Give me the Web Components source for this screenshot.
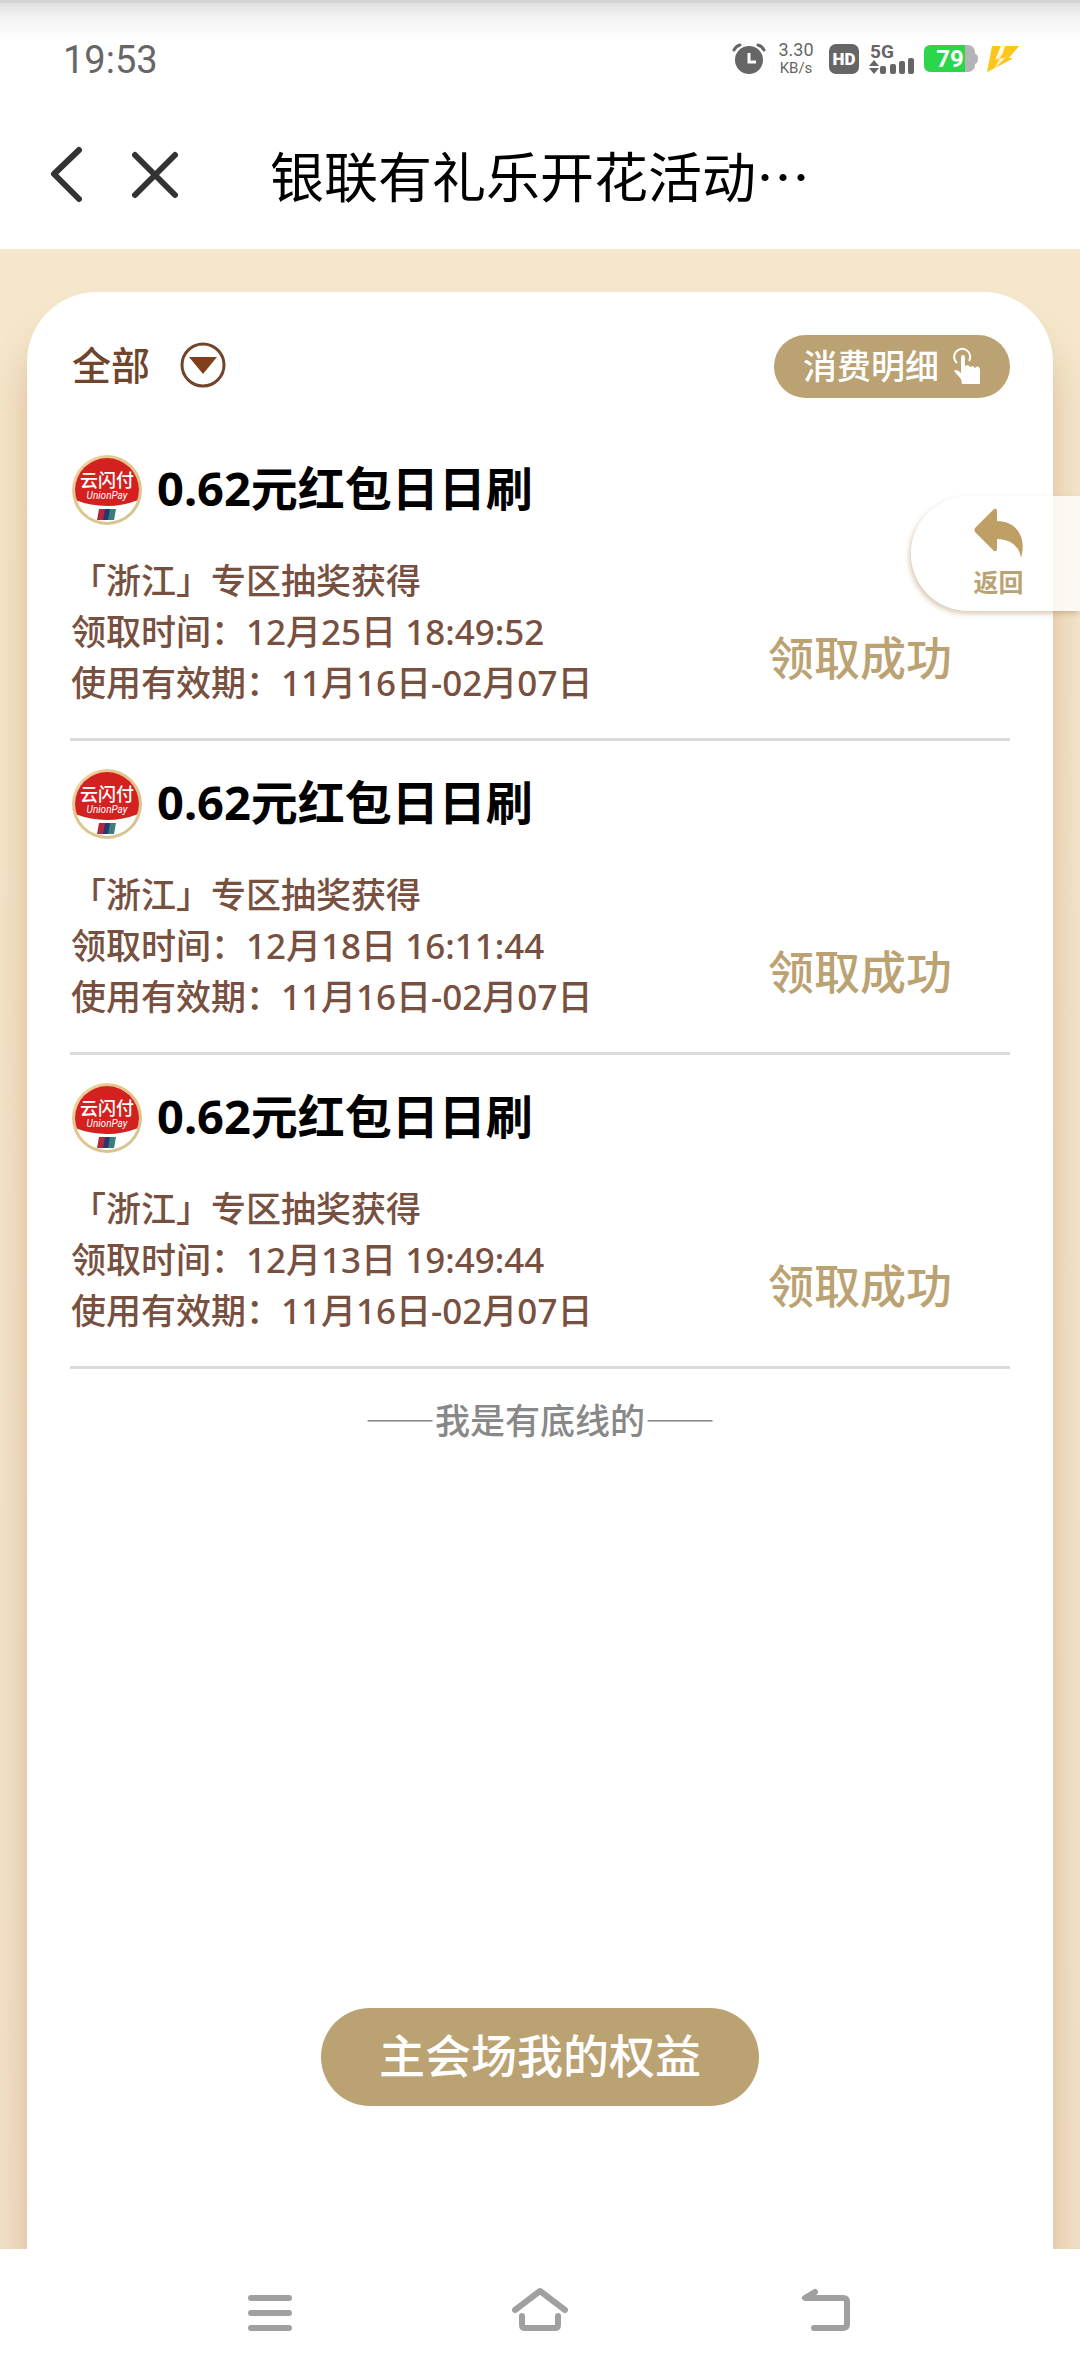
<!DOCTYPE html>
<html lang="zh-CN">
<head>
<meta charset="UTF-8">
<meta name="viewport" content="width=device-width, initial-scale=1">
<title>银联有礼乐开花活动</title>
<style>
  :root {
    --gold: #bba272;
    --brown: #78503f;
    --line: #dbdbdb;
    --grey: #666666;
  }
  html, body {
    margin: 0;
    height: 100%;
  }
  body {
    font-family: "Noto Sans", "Noto Sans CJK SC", sans-serif;
    background: #ffffff;
  }
</style>
</head>
<body>
<coupon-app></coupon-app>

<script>
class StatusBar extends HTMLElement {
  constructor() {
    super();
    this.attachShadow({ mode: "open" });
  }

  connectedCallback() {
    this.shadowRoot.innerHTML = `
      <style>
        :host {
          display: flex;
          align-items: center;
          justify-content: space-between;
          height: 104px;
          padding: 14px 60px 0 63px;
          box-sizing: border-box;
          color: var(--grey);
          font-family: Roboto, "Noto Sans", sans-serif;
          background: linear-gradient(#d4d4d4 0, #d4d4d4 2px, #e2e2e2 4px, #f3f3f3 18px, #ffffff 40px);
        }
        .time {
          font-size: 38px;
          line-height: 44px;
          padding-top: 2px;
        }
        .icons {
          display: flex;
          align-items: center;
        }
        svg { display: block; }
        .speed {
          display: flex;
          flex-direction: column;
          align-items: center;
          width: 40px;
          margin: 0 12px 0 10px;
          font-size: 18px;
          line-height: 18px;
        }
        .speed .unit { font-size: 15px; }
        .hd { margin-right: 9px; }
        .signal { margin-right: 9px; }
        .battery { margin-right: 8px; }
      </style>
      <div class="time">19:53</div>
      <div class="icons">
        <svg width="34" height="32" viewBox="0 0 34 32">
          <circle cx="17" cy="17" r="14" fill="#666"/>
          <path d="M2 7Q4 3 8 2M32 7Q30 3 26 2" fill="none" stroke="#666" stroke-width="3" stroke-linecap="round"/>
          <path d="M17 10V19H24" fill="none" stroke="#fff" stroke-width="3"/>
        </svg>
        <div class="speed"><span>3.30</span><span class="unit">KB/s</span></div>
        <svg class="hd" width="32" height="32" viewBox="0 0 32 32">
          <rect x="1" y="1" width="30" height="30" rx="7" fill="#666"/>
          <text x="16" y="22" text-anchor="middle" font-size="17" font-weight="900" fill="#fff">HD</text>
        </svg>
        <svg class="signal" width="46" height="40" viewBox="0 -4 46 40">
          <text x="1" y="15" font-size="19" font-weight="700" fill="#666">5G</text>
          <path d="M5 17L10 23H0ZM0 25H10L5 31Z" fill="#666"/>
          <rect x="11" y="23" width="6" height="8" rx="2" fill="#666"/>
          <rect x="21" y="21" width="6" height="10" rx="2" fill="#666"/>
          <rect x="30" y="18" width="6" height="13" rx="2" fill="#666"/>
          <rect x="39" y="15" width="6" height="16" rx="2" fill="#666"/>
        </svg>
        <svg class="battery" width="54" height="28" viewBox="0 0 54 28">
          <rect width="51" height="27" rx="7" fill="#b4b4b8"/>
          <path d="M50 8Q54 9 54 14T50 19Z" fill="#b4b4b8"/>
          <path d="M7 0H41V27H7Q0 27 0 20V7Q0 0 7 0Z" fill="#2bd64a"/>
          <text x="26" y="22" text-anchor="middle" font-size="24" font-weight="700" fill="#fff">79</text>
        </svg>
        <svg width="34" height="28" viewBox="0 0 34 28">
          <path d="M6 1H15L10 13L17 9L33 1L22 14H26L1 27Z" fill="#fdc61c"/>
          <path d="M19 1H33L22 13H27L1 27L8 18L14 17Z" fill="#fdc61c"/>
          <path d="M18 1L9 15L14 13L8 24L20 12L14 14Z" fill="#fff6d8"/>
        </svg>
      </div>
    `;
  }
}

class NavHeader extends HTMLElement {
  constructor() {
    super();
    this.attachShadow({ mode: "open" });
  }

  connectedCallback() {
    this.shadowRoot.innerHTML = `
      <style>
        :host {
          display: flex;
          align-items: center;
          height: 145px;
          padding: 0 48px 4px;
          box-sizing: border-box;
          background: #ffffff;
        }
        button {
          display: block;
          padding: 0;
          border: 0;
          background: none;
        }
        svg { display: block; }
        .close { margin-left: 44px; }
        h1 {
          margin: 0 0 0 92px;
          font-size: 54px;
          line-height: 64px;
          font-weight: 400;
          font-family: "Noto Sans CJK SC", sans-serif;
          color: #000000;
        }
      </style>
      <button class="back" aria-label="返回上一页">
        <svg width="40" height="60" viewBox="0 0 40 60"><path d="M31 5L6 29L31 54" fill="none" stroke="#333" stroke-width="6" stroke-linecap="round" stroke-linejoin="round"/></svg>
      </button>
      <button class="close" aria-label="关闭">
        <svg width="46" height="60" viewBox="0 0 46 60"><path d="M3 10L43 50M43 10L3 50" fill="none" stroke="#333" stroke-width="6" stroke-linecap="round"/></svg>
      </button>
      <h1><slot></slot></h1>
    `;
  }
}

class FilterBar extends HTMLElement {
  constructor() {
    super();
    this.attachShadow({ mode: "open" });
  }

  connectedCallback() {
    this.shadowRoot.innerHTML = `
      <style>
        :host {
          display: flex;
          align-items: center;
          justify-content: space-between;
        }
        button {
          display: flex;
          align-items: center;
          border: 0;
          font-family: inherit;
          font-weight: 500;
        }
        svg { display: block; }
        .filter {
          gap: 30px;
          padding: 0 0 4px 2px;
          background: none;
          color: #70452c;
          font-size: 39px;
          line-height: 48px;
        }
        .detail {
          gap: 14px;
          height: 63px;
          padding: 0 27px 2px 29px;
          border-radius: 32px;
          background: var(--gold);
          color: #ffffff;
          font-size: 34px;
          line-height: 40px;
        }
      </style>
      <button class="filter">
        <span>全部</span>
        <svg width="46" height="46" viewBox="0 0 46 46">
          <circle cx="23" cy="23" r="21" fill="none" stroke="#70452c" stroke-width="3"/>
          <path d="M9 15H37L23 32Z" fill="#80401a"/>
        </svg>
      </button>
      <button class="detail">
        <span>消费明细</span>
        <svg width="30" height="38" viewBox="0 0 30 38">
          <path d="M4 16A8 8 0 1 1 16 14" fill="none" stroke="#fff" stroke-width="2"/>
          <path d="M8 11Q8 8 10 8T12 11V19L15 18L17 20L20 19L22 21L25 19L27 22V37H9L8 32L1 24Q3 21 8 26Z" fill="#fff"/>
        </svg>
      </button>
    `;
  }
}

class CouponItem extends HTMLElement {
  constructor() {
    super();
    this.attachShadow({ mode: "open" });
  }

  connectedCallback() {
    this.shadowRoot.innerHTML = `
      <style>
        :host {
          display: block;
          padding: 27px 0 30px;
          border-bottom: 3px solid var(--line);
        }
        .head {
          display: flex;
          align-items: center;
          gap: 14px;
          height: 72px;
        }
        h2 {
          margin: 0;
          padding-bottom: 4px;
          font-size: 47px;
          line-height: 56px;
          font-weight: 700;
          color: #000000;
        }
        .body {
          display: flex;
          align-items: flex-end;
          justify-content: space-between;
          padding: 29px 58px 0 1px;
        }
        .info {
          color: var(--brown);
          font-size: 35px;
          line-height: 51px;
          font-weight: 500;
        }
        .state {
          padding-bottom: 23px;
          color: var(--gold);
          font-size: 46px;
          line-height: 56px;
          font-weight: 500;
        }
      </style>
      <div class="head">
        <svg width="73" height="72" viewBox="0 0 73 72">
          <defs>
            <linearGradient id="rim" x1="0" y1="0" x2="1" y2="1">
              <stop offset="0" stop-color="#f2dfb4"/>
              <stop offset="0.3" stop-color="#e6c687"/>
              <stop offset="1" stop-color="#d3c394"/>
            </linearGradient>
            <clipPath id="face"><circle cx="37" cy="36" r="32"/></clipPath>
          </defs>
          <circle cx="37" cy="36" r="35" fill="url(#rim)"/>
          <circle cx="37" cy="36" r="32" fill="#fff"/>
          <path d="M0 0H73V44Q37 60 0 44Z" fill="#d3211f" clip-path="url(#face)"/>
          <text x="37" y="33" text-anchor="middle" font-size="18" font-weight="500" fill="#fff">云闪付</text>
          <text x="37" y="45" text-anchor="middle" font-size="10" font-style="italic" font-family="Roboto, sans-serif" fill="#fff">UnionPay</text>
          <path d="M29 55H36L34 66H27Z" fill="#b7253c"/>
          <path d="M35 55H41L39 66H33Z" fill="#27376f"/>
          <path d="M40 55H46L44 66H38Z" fill="#3b7f7d"/>
        </svg>
        <h2><slot></slot></h2>
      </div>
      <div class="body">
        <div class="info">
          <div>${this.getAttribute("source")}</div>
          <div>领取时间：${this.getAttribute("time")}</div>
          <div>使用有效期：${this.getAttribute("valid")}</div>
        </div>
        <div class="state">${this.getAttribute("state")}</div>
      </div>
    `;
  }
}

class BackTag extends HTMLElement {
  constructor() {
    super();
    this.attachShadow({ mode: "open" });
  }

  connectedCallback() {
    this.shadowRoot.innerHTML = `
      <style>
        :host {
          display: block;
        }
        button {
          display: flex;
          flex-direction: column;
          align-items: center;
          justify-content: center;
          gap: 8px;
          width: 169px;
          height: 115px;
          padding: 0 0 4px 6px;
          border: 0;
          border-radius: 58px 0 0 58px;
          background: rgba(255, 255, 255, 0.8);
          box-shadow: -2px 3px 5px rgba(170, 130, 80, 0.4);
          color: var(--gold);
          font-family: "Noto Sans CJK SC", sans-serif;
          font-size: 25px;
          line-height: 30px;
          font-weight: 700;
        }
        svg { display: block; }
      </style>
      <button>
        <svg width="50" height="50" viewBox="0 0 50 50">
          <path d="M20 1Q23 0 23 3V13C43 13 53 30 47 50C45 37 35 31 23 31V41Q23 44 20 43L1 24Q0 22 1 20Z" fill="#bea067"/>
        </svg>
        <span>返回</span>
      </button>
    `;
  }
}

class SystemNav extends HTMLElement {
  constructor() {
    super();
    this.attachShadow({ mode: "open" });
  }

  connectedCallback() {
    this.shadowRoot.innerHTML = `
      <style>
        :host {
          display: grid;
          grid-template-columns: repeat(3, 1fr);
          align-items: center;
          justify-items: center;
          height: 127px;
          padding: 0 12.5% 2px;
          box-sizing: border-box;
          background: #ffffff;
        }
        button {
          padding: 0;
          border: 0;
          background: none;
        }
        svg {
          display: block;
          fill: none;
          stroke: #a0a0a0;
          stroke-width: 6;
          stroke-linecap: round;
          stroke-linejoin: round;
        }
      </style>
      <button aria-label="最近任务">
        <svg width="56" height="50" viewBox="0 0 56 50"><path d="M9 11H47M9 26H47M9 41H47"/></svg>
      </button>
      <button aria-label="主屏幕">
        <svg width="60" height="50" viewBox="0 0 60 50"><path d="M5 23L30 4L55 23M12 29V38Q12 41 15 41H45Q48 41 48 38V29"/></svg>
      </button>
      <button aria-label="返回键">
        <svg width="86" height="50" viewBox="-32 0 86 50"><path d="M16 5L6 11H44Q48 11 48 15V37Q48 41 44 41H15"/></svg>
      </button>
    `;
  }
}

class CouponApp extends HTMLElement {
  constructor() {
    super();
    this.attachShadow({ mode: "open" });
    this._coupons = [
      { time: "12月25日 18:49:52" },
      { time: "12月18日 16:11:44" },
      { time: "12月13日 19:49:44" },
    ];
  }

  connectedCallback() {
    const items = this._coupons
      .map(
        (c) => `
        <coupon-item source="「浙江」专区抽奖获得" time="${c.time}"
          valid="11月16日-02月07日" state="领取成功">0.62元红包日日刷</coupon-item>`,
      )
      .join("");

    this.shadowRoot.innerHTML = `
      <style>
        :host {
          display: flex;
          flex-direction: column;
          min-height: 100vh;
        }
        main {
          flex: 1;
          display: flex;
          flex-direction: column;
          position: relative;
          padding: 43px 27px 0;
          overflow: hidden;
          background: linear-gradient(#f4e7cb 0, #f4e7cb 200px, #f2e2c8 100%);
        }
        .card {
          flex: 1;
          display: flex;
          flex-direction: column;
          padding: 43px 43px 143px;
          border-radius: 70px 70px 0 0;
          background: #ffffff;
          box-shadow: 0 36px 36px rgba(185, 120, 75, 0.42);
        }
        .list { margin-top: 29px; }
        .end {
          margin: 24px 0 0;
          text-align: center;
          color: #888888;
          font-size: 35px;
          line-height: 51px;
          font-family: "Noto Sans CJK SC", sans-serif;
          font-weight: 500;
        }
        .rights {
          align-self: center;
          height: 98px;
          margin-top: auto;
          padding: 0 58px 4px;
          border: 0;
          border-radius: 49px;
          background: var(--gold);
          color: #ffffff;
          font-family: inherit;
          font-size: 46px;
          line-height: 56px;
          font-weight: 500;
        }
        /* floats over the right edge of the card */
        back-tag {
          position: absolute;
          top: 247px;
          right: 0;
        }
      </style>
      <status-bar></status-bar>
      <nav-header>银联有礼乐开花活动⋯</nav-header>
      <main>
        <section class="card">
          <filter-bar></filter-bar>
          <div class="list">${items}</div>
          <p class="end">——我是有底线的——</p>
          <button class="rights">主会场我的权益</button>
        </section>
        <back-tag></back-tag>
      </main>
      <system-nav></system-nav>
    `;
  }
}

customElements.define("status-bar", StatusBar);
customElements.define("nav-header", NavHeader);
customElements.define("filter-bar", FilterBar);
customElements.define("coupon-item", CouponItem);
customElements.define("back-tag", BackTag);
customElements.define("system-nav", SystemNav);
customElements.define("coupon-app", CouponApp);
</script>
</body>
</html>
